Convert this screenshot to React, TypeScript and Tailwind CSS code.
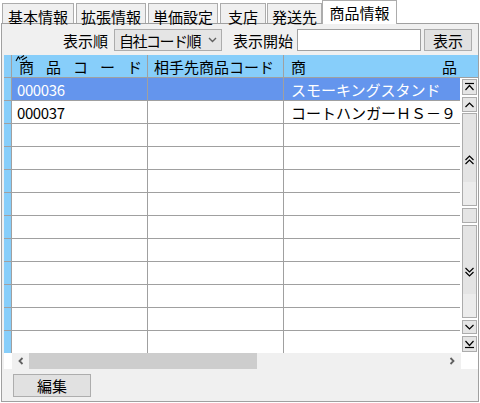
import React from "react";

const font = "font-['Noto_Sans_CJK_JP','Noto_Sans_CJK_SC',sans-serif]";

const tabs = [
  { label: "基本情報", w: "w-[72px]", ml: "ml-[2px]" },
  { label: "拡張情報", w: "w-[70px]", ml: "ml-[2px]" },
  { label: "単価設定", w: "w-[70px]", ml: "ml-[2px]" },
  { label: "支店", w: "w-[46px]", ml: "ml-[2px]" },
  { label: "発送先", w: "w-[55px]", ml: "ml-[1px]" },
];

const rows = [
  { code: "000036", partner: "", name: "スモーキングスタンド" },
  { code: "000037", partner: "", name: "コートハンガーＨＳ－９" },
  ...Array.from({ length: 10 }, () => ({ code: "", partner: "", name: "" })),
];

function ScrollIcon({ kind }: { kind: "top" | "up" | "pageUp" | "pageDown" | "down" | "bottom" }) {
  const p = { stroke: "#000", strokeWidth: 1.2, fill: "none" };
  return (
    <svg width="11" height="10" viewBox="0 0 11 10">
      {kind === "top" && (
        <>
          <path d="M1 1.5H10" {...p} />
          <path d="M1.5 8L5.5 3.5L9.5 8" {...p} />
        </>
      )}
      {kind === "up" && <path d="M1.5 7L5.5 3L9.5 7" {...p} />}
      {kind === "pageUp" && (
        <>
          <path d="M1.5 5L5.5 1L9.5 5" {...p} />
          <path d="M1.5 9L5.5 5L9.5 9" {...p} />
        </>
      )}
      {kind === "pageDown" && (
        <>
          <path d="M1.5 1L5.5 5L9.5 1" {...p} />
          <path d="M1.5 5L5.5 9L9.5 5" {...p} />
        </>
      )}
      {kind === "down" && <path d="M1.5 3L5.5 7L9.5 3" {...p} />}
      {kind === "bottom" && (
        <>
          <path d="M1.5 2L5.5 6.5L9.5 2" {...p} />
          <path d="M1 8.5H10" {...p} />
        </>
      )}
    </svg>
  );
}

export default function App() {
  return (
    <div className={`w-[480px] h-[403px] bg-white text-black ${font} text-[15px] leading-none`}>
      {/* tab strip */}
      <div className="flex items-end h-[23px]">
        {tabs.map((t) => (
          <div
            key={t.label}
            className={`${t.w} ${t.ml} h-[20px] flex justify-center pt-[5px] border-t border-l border-r border-[#acacac] bg-[#f0f0f0]`}
          >
            {t.label}
          </div>
        ))}
        <div className="relative z-10 w-[75px] h-[24px] -mb-px flex justify-center pt-[4px] border-t border-l border-r border-[#acacac] bg-white">
          商品情報
        </div>
      </div>

      {/* panel */}
      <div className="ml-[1px] w-[478px] h-[379px] border border-[#a0a0a0] bg-[#f0f0f0] flex flex-col">
        {/* toolbar */}
        <div className="flex items-center h-[22px] mt-[5px] pl-[61px]">
          <span className="w-[45px]">表示順</span>
          <div className="ml-[6px] w-[108px] h-[22px] flex items-center justify-between pl-[4px] pr-[4px] border border-[#acacac] bg-[#e5e5e5]">
            <span className="whitespace-nowrap tracking-[-1.5px]">自社コード順</span>
            <svg className="shrink-0" width="9" height="6" viewBox="0 0 9 6">
              <path d="M1 1L4.5 4.5L8 1" stroke="#606060" strokeWidth="1.4" fill="none" />
            </svg>
          </div>
          <span className="ml-[11px] w-[60px] whitespace-nowrap">表示開始</span>
          <div className="ml-[4px] w-[124px] h-[22px] border border-[#a0a0a0] bg-white" />
          <div className="ml-[3px] w-[48px] h-[22px] flex items-center justify-center border border-[#adadad] bg-[#e1e1e1]">
            表示
          </div>
        </div>

        {/* grid */}
        <div className="mt-[4px] ml-[2px] w-[474px] h-[314px] bg-white flex flex-col">
          {/* header */}
          <div className="flex h-[23px] shrink-0 border-b border-[#a0a0a0] bg-[#87cefa]">
            <div className="w-[8px] border-r border-[#a0a0a0]" />
            <div className="relative w-[136px] border-r border-[#a0a0a0] flex items-center justify-between pl-[7px] pr-[5px]">
              <svg className="absolute left-[3px] top-0" width="13" height="7" viewBox="0 0 13 7">
                <path d="M1 6L3.5 1.5M3.5 1.5L5 4.5M5.5 3L9 0.5M7 5L12 2" stroke="#000" strokeWidth="1.1" fill="none" />
              </svg>
              {"商品コード".split("").map((c, i) => (
                <span key={i}>{c}</span>
              ))}
            </div>
            <div className="w-[136px] border-r border-[#a0a0a0] flex items-center pl-[6px] whitespace-nowrap">相手先商品コード</div>
            <div className="flex-1 flex items-center justify-between pl-[7px] pr-[21px]">
              <span>商</span>
              <span>品</span>
            </div>
          </div>

          {/* body */}
          <div className="flex h-[275px]">
            <div className="w-[456px] overflow-hidden">
              {rows.map((r, i) => {
                const sel = i === 0;
                return (
                  <div key={i} className={`flex h-[23px] border-b border-[#a0a0a0] ${sel ? "bg-[#6495ed] text-white" : "bg-white"}`}>
                    <div className="w-[8px] border-r border-[#a0a0a0] bg-[#87cefa]" />
                    <div className="w-[136px] border-r border-[#a0a0a0] flex items-center pl-[5px] tracking-[-0.4px]">
                      {r.code}
                    </div>
                    <div className="w-[136px] border-r border-[#a0a0a0] flex items-center pl-[6px]">{r.partner}</div>
                    <div className="flex-1 flex items-center pl-[7px] whitespace-nowrap overflow-hidden">{r.name}</div>
                  </div>
                );
              })}
            </div>
            {/* vertical scrollbar */}
            <div className="w-[18px] pl-[2px] pt-[1px] flex flex-col">
              <div className="w-[15px] h-[16px] flex items-center justify-center border border-[#acacac] bg-[#e5e5e5]">
                <ScrollIcon kind="top" />
              </div>
              <div className="mt-[2px] w-[15px] h-[15px] flex items-center justify-center border border-[#acacac] bg-[#e5e5e5]">
                <ScrollIcon kind="up" />
              </div>
              <div className="mt-[1px] w-[15px] h-[93px] flex items-center justify-center border border-[#acacac] bg-linear-to-b from-[#e4e4e4] from-75% to-[#ececec] to-75%">
                <ScrollIcon kind="pageUp" />
              </div>
              <div className="mt-[2px] w-[15px] h-[15px] border border-[#acacac] bg-[#e5e5e5]" />
              <div className="mt-[2px] w-[15px] h-[93px] flex items-center justify-center border border-[#acacac] bg-linear-to-b from-[#e4e4e4] from-75% to-[#ececec] to-75%">
                <ScrollIcon kind="pageDown" />
              </div>
              <div className="mt-[2px] w-[15px] h-[14px] flex items-center justify-center border border-[#acacac] bg-[#e5e5e5]">
                <ScrollIcon kind="down" />
              </div>
              <div className="mt-[2px] w-[15px] h-[16px] flex items-center justify-center border border-[#acacac] bg-[#e5e5e5]">
                <ScrollIcon kind="bottom" />
              </div>
            </div>
          </div>

          {/* horizontal scrollbar */}
          <div className="flex h-[16px]">
            <div className="w-[8px] bg-white" />
            <div className="flex-1 flex bg-[#f0f0f0]">
              <div className="w-[17px] flex items-center justify-center">
                <svg width="6" height="8" viewBox="0 0 6 8">
                  <path d="M4.5 1L1.5 4L4.5 7" stroke="#606060" strokeWidth="1.8" fill="none" />
                </svg>
              </div>
              <div className="w-[228px] bg-[#cdcdcd]" />
              <div className="flex-1 flex items-center justify-end pr-[6px]">
                <svg width="6" height="8" viewBox="0 0 6 8">
                  <path d="M1.5 1L4.5 4L1.5 7" stroke="#606060" strokeWidth="1.8" fill="none" />
                </svg>
              </div>
            </div>
            <div className="w-[17px] bg-white" />
          </div>
        </div>

        {/* footer */}
        <div className="mt-[5px] ml-[11px] w-[78px] h-[23px] flex items-center justify-center border border-[#adadad] bg-[#e1e1e1]">
          編集
        </div>
      </div>
    </div>
  );
}
